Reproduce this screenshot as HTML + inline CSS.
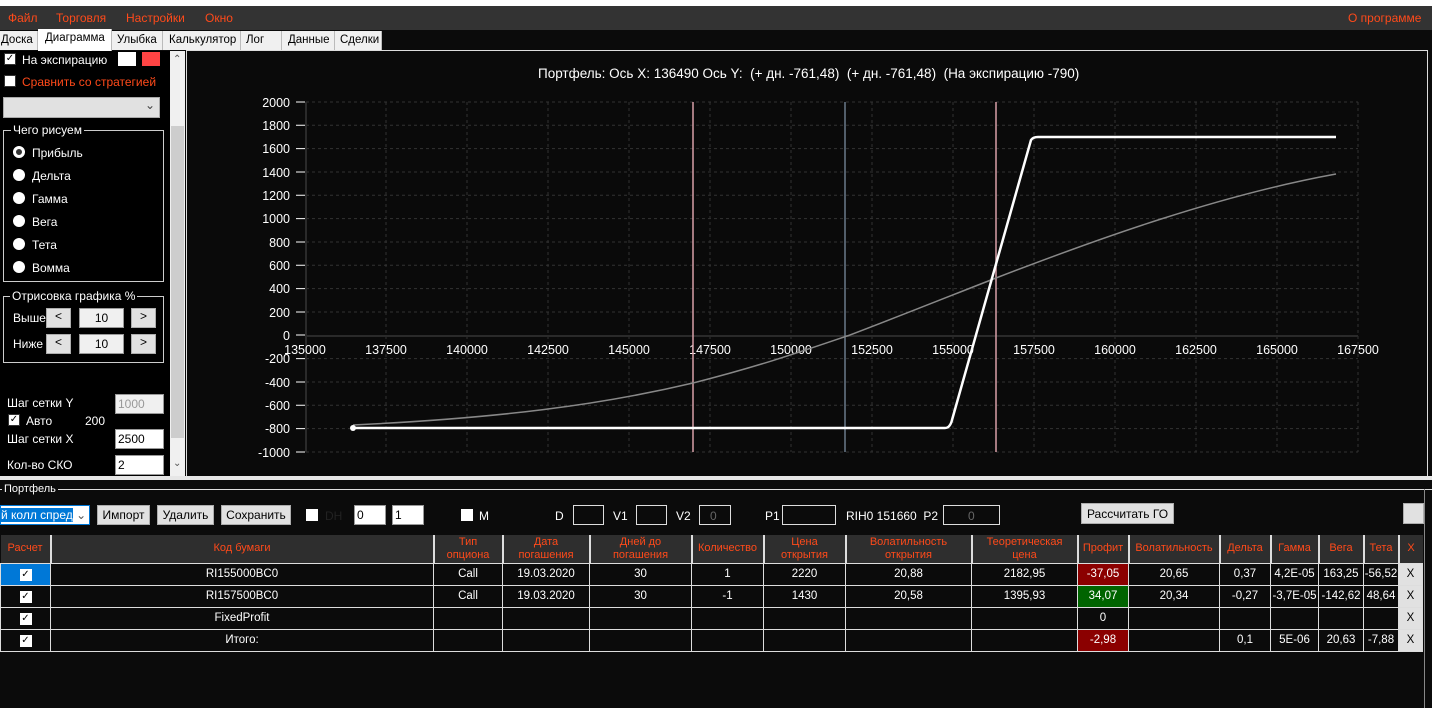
<!DOCTYPE html>
<html><head><meta charset="utf-8"><style>
*{margin:0;padding:0;box-sizing:border-box}
body{width:1432px;height:708px;background:#0b0b0b;position:relative;overflow:hidden;font-family:"Liberation Sans",sans-serif;font-size:12px;color:#fff}
.a{position:absolute;white-space:nowrap}
.or{color:#ff4a1a}
.tab{position:absolute;top:31px;height:19px;background:#f0f0f0;color:#000;border-right:1px solid #bbb;padding:3px 0 0 3px;font-size:11.5px}
.btn{position:absolute;background:#e1e1e1;border:1px solid #adadad;color:#000;text-align:center;font-size:12px}
.cb{position:absolute;width:12px;height:12px;background:#fff;border:1px solid #333;color:#000;font-size:10px;line-height:10px;text-align:center}
.rad{position:absolute;width:12px;height:12px;border-radius:50%;background:#fff}
.inp{position:absolute;background:#f0f0f0;border:1px solid #999;color:#000;text-align:center}
table{border-collapse:collapse;position:absolute;left:0;top:535px;table-layout:fixed}
td{border:1px solid #ddd;height:22px;text-align:center;font-size:11.5px;color:#fff;padding:0;overflow:hidden;white-space:nowrap}
th{background:#2e2e2e;color:#ff4a1a;font-weight:normal;font-size:11px;line-height:13px;height:28px;border-left:2px solid #ddd;padding:0;overflow:hidden}
</style></head><body>
<div class="a" style="left:0;top:0;width:1432px;height:6px;background:#fff"></div>
<div class="a" style="left:0;top:6px;width:1432px;height:24px;background:#333"></div>
<div class="a or" style="left:8px;top:11px">Файл</div>
<div class="a or" style="left:56px;top:11px">Торговля</div>
<div class="a or" style="left:126px;top:11px">Настройки</div>
<div class="a or" style="left:205px;top:11px">Окно</div>
<div class="a or" style="left:1348px;top:11px">О программе</div>
<div class="tab" style="left:0;width:38px;padding-left:1px">Доска</div>
<div class="tab" style="left:38px;width:74px;top:29px;height:22px;background:#fff;padding-left:7px">Диаграмма</div>
<div class="tab" style="left:112px;width:51px;padding-left:5px">Улыбка</div>
<div class="tab" style="left:163px;width:78px;padding-left:6px">Калькулятор</div>
<div class="tab" style="left:241px;width:41px;padding-left:5px">Лог</div>
<div class="tab" style="left:282px;width:53px;padding-left:6px">Данные</div>
<div class="tab" style="left:335px;width:47px;padding-left:5px">Сделки</div>
<!-- left panel -->
<div class="a" style="left:0;top:51px;width:170px;height:425px;background:#000"></div>
<div class="cb" style="left:4px;top:53px">✓</div><div class="a" style="left:22px;top:53px">На экспирацию</div>
<div class="a" style="left:118px;top:52px;width:18px;height:14px;background:#fff"></div>
<div class="a" style="left:142px;top:52px;width:18px;height:14px;background:#f44"></div>
<div class="cb" style="left:4px;top:75px"></div><div class="a or" style="left:22px;top:75px">Сравнить со стратегией</div>
<div class="a" style="left:3px;top:97px;width:157px;height:21px;background:#e1e1e1;border:1px solid #aaa;color:#444;text-align:right;padding-right:4px">⌄</div>
<div class="a" style="left:3px;top:130px;width:161px;height:152px;border:1px solid #ccc"></div>
<div class="a" style="left:11px;top:123px;background:#000;padding:0 2px">Чего рисуем</div>
<div class="rad" style="left:13px;top:146px;border:3px solid #fff;background:#333"></div><div class="a" style="left:32px;top:146px">Прибыль</div>
<div class="rad" style="left:13px;top:169px"></div><div class="a" style="left:32px;top:169px">Дельта</div>
<div class="rad" style="left:13px;top:192px"></div><div class="a" style="left:32px;top:192px">Гамма</div>
<div class="rad" style="left:13px;top:215px"></div><div class="a" style="left:32px;top:215px">Вега</div>
<div class="rad" style="left:13px;top:238px"></div><div class="a" style="left:32px;top:238px">Тета</div>
<div class="rad" style="left:13px;top:261px"></div><div class="a" style="left:32px;top:261px">Вомма</div>
<div class="a" style="left:3px;top:296px;width:161px;height:67px;border:1px solid #ccc"></div>
<div class="a" style="left:10px;top:289px;background:#000;padding:0 2px">Отрисовка графика %</div>
<div class="a" style="left:13px;top:311px">Выше</div>
<div class="btn" style="left:46px;top:308px;width:25px;height:20px">&lt;</div>
<div class="inp" style="left:79px;top:308px;width:45px;height:20px;padding-top:2px">10</div>
<div class="btn" style="left:131px;top:308px;width:25px;height:20px">&gt;</div>
<div class="a" style="left:13px;top:337px">Ниже</div>
<div class="btn" style="left:46px;top:334px;width:25px;height:20px">&lt;</div>
<div class="inp" style="left:79px;top:334px;width:45px;height:20px;padding-top:2px">10</div>
<div class="btn" style="left:131px;top:334px;width:25px;height:20px">&gt;</div>
<div class="a" style="left:7px;top:396px">Шаг сетки Y</div>
<div class="inp" style="left:115px;top:394px;width:49px;height:20px;color:#999;text-align:left;padding:2px 2px">1000</div>
<div class="cb" style="left:8px;top:414px">✓</div><div class="a" style="left:26px;top:414px">Авто</div><div class="a" style="left:85px;top:414px">200</div>
<div class="a" style="left:7px;top:432px">Шаг сетки X</div>
<div class="inp" style="left:115px;top:429px;width:49px;height:20px;background:#fff;text-align:left;padding:2px 2px">2500</div>
<div class="a" style="left:7px;top:458px">Кол-во СКО</div>
<div class="inp" style="left:115px;top:455px;width:49px;height:20px;background:#fff;text-align:left;padding:2px 2px">2</div>
<div class="a" style="left:170px;top:51px;width:15px;height:425px;background:#f0f0f0"></div>
<div class="a" style="left:171px;top:126px;width:13px;height:312px;background:#cdcdcd"></div>
<div class="a" style="left:173px;top:54px;color:#555;font-size:10px">⌃</div>
<div class="a" style="left:173px;top:458px;color:#555;font-size:10px">⌄</div>
<!-- chart -->
<div class="a" style="left:186px;top:50px;width:1242px;height:426px;background:#0a0a0a;border:1px solid #ddd;border-bottom:none"></div>
<div class="a" style="left:538px;top:66px;font-size:13.5px">Портфель: Ось X: 136490 Ось Y:&nbsp; (+ дн. -761,48)&nbsp; (+ дн. -761,48)&nbsp; (На экспирацию -790)</div>
<svg class="a" style="left:0;top:0" width="1432" height="480" font-family="Liberation Sans" font-size="12.5" fill="#fff">
<g stroke="#333" stroke-dasharray="3,3" stroke-width="1">
<path d="M386 102V452M467 102V452M548 102V452M629 102V452M710 102V452M791 102V452M872 102V452M953 102V452M1034 102V452M1115 102V452M1196 102V452M1277 102V452M1358 102V452"/>
<path d="M306 102H1358M306 125.3H1358M306 148.6H1358M306 172H1358M306 195.3H1358M306 218.6H1358M306 242H1358M306 265.3H1358M306 288.6H1358M306 312H1358M306 358.6H1358M306 382H1358M306 405.3H1358M306 428.6H1358M306 452H1358"/>
</g>
<path d="M306 102V452M306 336H1358" stroke="#2a2a2a" stroke-width="2"/>
<g stroke="#fff"><path d="M296 102h9M296 125.3h9M296 148.6h9M296 172h9M296 195.3h9M296 218.6h9M296 242h9M296 265.3h9M296 288.6h9M296 312h9M296 335h9M296 358.6h9M296 382h9M296 405.3h9M296 428.6h9M296 452h9"/></g>
<g text-anchor="end">
<text x="290" y="107">2000</text><text x="290" y="130">1800</text><text x="290" y="153">1600</text><text x="290" y="177">1400</text><text x="290" y="200">1200</text><text x="290" y="223">1000</text><text x="290" y="247">800</text><text x="290" y="270">600</text><text x="290" y="293">400</text><text x="290" y="317">200</text><text x="290" y="340">0</text><text x="290" y="363">-200</text><text x="290" y="387">-400</text><text x="290" y="410">-600</text><text x="290" y="433">-800</text><text x="290" y="457">-1000</text>
</g>
<g text-anchor="middle">
<text x="305" y="354">135000</text><text x="386" y="354">137500</text><text x="467" y="354">140000</text><text x="548" y="354">142500</text><text x="629" y="354">145000</text><text x="710" y="354">147500</text><text x="791" y="354">150000</text><text x="872" y="354">152500</text><text x="953" y="354">155000</text><text x="1034" y="354">157500</text><text x="1115" y="354">160000</text><text x="1196" y="354">162500</text><text x="1277" y="354">165000</text><text x="1358" y="354">167500</text>
</g>
<path d="M693 102V452M996 102V452" stroke="#d8a0a8" stroke-width="1.5"/>
<path d="M845 102V452" stroke="#6a7a8a" stroke-width="1.5"/>
<path d="M353 425 C500 418 600 405 693 383 C760 366 800 352 850 335 C900 316 960 292 996 278 C1100 238 1220 195 1336 174" fill="none" stroke="#888" stroke-width="1.5"/>
<path d="M353 428 H945 Q950 428 952 420 L1031 140 Q1033 137 1038 137 H1336" fill="none" stroke="#fff" stroke-width="2.5"/>
<circle cx="353" cy="428" r="3" fill="#fff"/>
</svg>
<!-- bottom -->
<div class="a" style="left:0;top:476px;width:1432px;height:4px;background:#e6e6e6"></div>
<div class="a" style="left:0;top:480px;width:1432px;height:228px;background:#0b0b0b"></div>
<div class="a" style="left:0;top:489px;width:1432px;height:1px;background:#ddd"></div>
<div class="a" style="left:2px;top:483px;background:#0b0b0b;padding:0 2px;font-size:11px">Портфель</div>
<div class="a" style="left:1424px;top:489px;width:1px;height:219px;background:#888"></div>
<div class="a" style="left:0;top:505px;width:90px;height:20px;background:#fff;border:1px solid #0078d7;color:#000;padding:2px 0 0 0"><span style="background:#0078d7;color:#fff">й колл спред</span> <span style="color:#555">⌄</span></div>
<div class="btn" style="left:97px;top:505px;width:53px;height:20px;padding-top:2px">Импорт</div>
<div class="btn" style="left:157px;top:505px;width:57px;height:20px;padding-top:2px">Удалить</div>
<div class="btn" style="left:221px;top:505px;width:70px;height:20px;padding-top:2px">Сохранить</div>
<div class="cb" style="left:306px;top:509px;border:none"></div><div class="a" style="left:325px;top:509px;color:#222">DH</div>
<div class="inp" style="left:354px;top:505px;width:32px;height:20px;background:#fff;text-align:left;padding:2px 2px">0</div>
<div class="inp" style="left:392px;top:505px;width:32px;height:20px;background:#fff;text-align:left;padding:2px 2px">1</div>
<div class="cb" style="left:461px;top:509px;border:none"></div><div class="a" style="left:479px;top:509px">M</div>
<div class="a" style="left:555px;top:509px">D</div><div class="a" style="left:573px;top:505px;width:31px;height:20px;border:1px solid #ddd"></div>
<div class="a" style="left:613px;top:509px">V1</div><div class="a" style="left:636px;top:505px;width:31px;height:20px;border:1px solid #ddd"></div>
<div class="a" style="left:676px;top:509px">V2</div><div class="a" style="left:699px;top:505px;width:32px;height:20px;border:1px solid #ddd;color:#666;padding:3px 0 0 10px">0</div>
<div class="a" style="left:765px;top:509px">P1</div><div class="a" style="left:782px;top:505px;width:54px;height:20px;border:1px solid #ddd"></div>
<div class="a" style="left:846px;top:509px">RIH0 151660&nbsp; P2</div>
<div class="a" style="left:943px;top:505px;width:57px;height:20px;border:1px solid #ddd;color:#666;padding:3px 0 0 24px">0</div>
<div class="btn" style="left:1081px;top:503px;width:93px;height:21px;padding-top:3px">Рассчитать ГО</div>
<div class="btn" style="left:1403px;top:503px;width:21px;height:21px"></div>
<table>
<colgroup><col style="width:50px"><col style="width:383px"><col style="width:69px"><col style="width:87px"><col style="width:102px"><col style="width:72px"><col style="width:82px"><col style="width:126px"><col style="width:106px"><col style="width:51px"><col style="width:91px"><col style="width:51px"><col style="width:48px"><col style="width:45px"><col style="width:35px"><col style="width:24px"></colgroup>
<tr><th style="border-left:none">Расчет</th><th>Код бумаги</th><th>Тип<br>опциона</th><th>Дата<br>погашения</th><th>Дней до<br>погашения</th><th>Количество</th><th>Цена<br>открытия</th><th>Волатильность<br>открытия</th><th>Теоретическая<br>цена</th><th>Профит</th><th>Волатильность</th><th>Дельта</th><th>Гамма</th><th>Вега</th><th>Тета</th><th>X</th></tr>
<tr><td style="background:#0078d7"><span style="display:inline-block;width:12px;height:12px;background:#fff;color:#000;font-size:10px;line-height:12px">✓</span></td><td>RI155000BC0</td><td>Call</td><td>19.03.2020</td><td>30</td><td>1</td><td>2220</td><td>20,88</td><td>2182,95</td><td style="background:#8b0000">-37,05</td><td>20,65</td><td>0,37</td><td>4,2E-05</td><td>163,25</td><td>-56,52</td><td style="background:#e1e1e1;color:#000">X</td></tr>
<tr><td><span style="display:inline-block;width:12px;height:12px;background:#fff;color:#000;font-size:10px;line-height:12px">✓</span></td><td>RI157500BC0</td><td>Call</td><td>19.03.2020</td><td>30</td><td>-1</td><td>1430</td><td>20,58</td><td>1395,93</td><td style="background:#006400">34,07</td><td>20,34</td><td>-0,27</td><td>-3,7E-05</td><td>-142,62</td><td>48,64</td><td style="background:#e1e1e1;color:#000">X</td></tr>
<tr><td><span style="display:inline-block;width:12px;height:12px;background:#fff;color:#000;font-size:10px;line-height:12px">✓</span></td><td>FixedProfit</td><td></td><td></td><td></td><td></td><td></td><td></td><td></td><td>0</td><td></td><td></td><td></td><td></td><td></td><td style="background:#e1e1e1;color:#000">X</td></tr>
<tr><td><span style="display:inline-block;width:12px;height:12px;background:#fff;color:#000;font-size:10px;line-height:12px">✓</span></td><td>Итого:</td><td></td><td></td><td></td><td></td><td></td><td></td><td></td><td style="background:#8b0000">-2,98</td><td></td><td>0,1</td><td>5E-06</td><td>20,63</td><td>-7,88</td><td style="background:#e1e1e1;color:#000">X</td></tr>
</table>
</body></html>
